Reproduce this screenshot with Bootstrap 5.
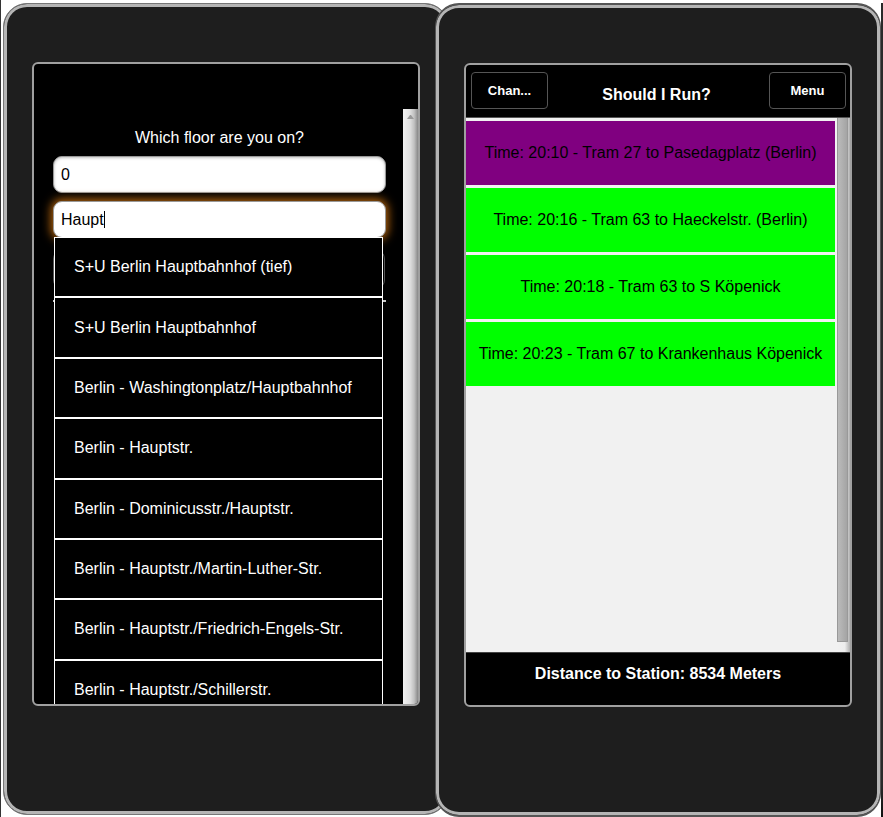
<!DOCTYPE html>
<html lang="en">
<head>
<meta charset="utf-8">
<meta name="viewport" content="width=device-width, initial-scale=1">
<title>Should I Run?</title>
<link href="https://cdn.jsdelivr.net/npm/bootstrap@5.3.0/dist/css/bootstrap.min.css" rel="stylesheet">
<style>
  body { font-family: "Liberation Sans", Arial, sans-serif; font-size: 16px; line-height: 20px; background: #fff; }
  .stage { padding: 3px 2px 0 2px; border-left: 1px solid #333; }
  .edge-strip { width: 2px; background: linear-gradient(#2a2a2a 96%, #111); top: 3px; }
  .phone { flex: 1 1 0; min-width: 0; padding: 58px 28px 108px; background: #1e1e1e; border: 1px solid #777; border-radius: 24px; box-shadow: inset 0 0 0 3px #b5b5b5; }
  .phone-front { margin-left: -14px; border-color: #555; border-width: 2px 1px; }
  .phone-back { margin-bottom: 2px; }
  .screen { border: 2px solid #a0a0a0; border-radius: 6px; background: #000; }
  .top-space { height: 45px; }
  .form-area { padding: 19px 17px 0 19px; min-width: 0; }
  .field { height: 37px; padding: 0 7px; border: 1px solid #999; border-radius: 9px; color: #000; background: #fff; font-size: 16px; box-shadow: inset 0 1px 3px rgba(0,0,0,.25); }
  .field.active-field, .field.active-field:focus { border-color: #999; box-shadow: 0 0 10px 2px #b8660c; outline: 0; }
  .caret { left: 51px; top: 10px; width: 1px; height: 17px; background: #000; }
  .menu-list { left: 1px; right: 3px; top: 36px; height: 484px; z-index: 2; border: 1px solid #fff; border-top: 0; background: #000; }
  .menu-list a { display: flex; align-items: center; padding-left: 19px; border-top: 1px solid #fff; border-bottom: 1px solid #fff; color: #fff; text-decoration: none; white-space: nowrap; }
  .under-panel { height: 39px; margin-top: 12px; border: solid #555; border-width: 0 1px; border-radius: 9px; margin-right: 1px; }
  .under-rule { height: 2px; margin-top: 11px; background: #ccc; }
  .bar-left { width: 15px; padding-top: 6px; background: linear-gradient(90deg, #f2f2f2 0, #e2e2e2 45%, #c0c0c0 75%, #888 100%); }
  .bar-left svg { width: 7px; height: 4px; margin-left: 4px; }
  .app-header { padding: 7px 4px 8px 5px; border-bottom: 1px solid #555; color: #fff; }
  .tool-btn { width: 77px; height: 37px; padding: 0; border: 1px solid #555; border-radius: 4px; background: #000; color: #fff; font-size: 13px; font-weight: 700; }
  .app-title { font-size: 16px; line-height: 20px; font-weight: 700; padding: 8px 4px 0 0; }
  .results { background: #f1f1f1; }
  .trips { padding: 3px 2px 0 0; min-width: 0; }
  .trip { height: 64px; margin-bottom: 3px; background: #0f0; color: #000; white-space: nowrap; }
  .trip-late { background: #800080; }
  .bar-right { width: 13px; background: linear-gradient(90deg, #f1f1f1, #eee 60%, #b0b0b0); padding: 0 2px 10px 0; }
  .thumb { border: 1px solid #999; border-top: 0; background: linear-gradient(90deg, #bbb, #a4a4a4); }
  .app-footer { height: 53px; padding-top: 11px; border-top: 1px solid #444; color: #fff; font-weight: 700; }
</style>
</head>
<body>
<div class="stage d-flex min-vh-100 position-relative">
  <section class="phone phone-back d-flex flex-column" aria-label="Station search">
    <div class="screen d-flex flex-column flex-fill overflow-hidden">
      <div class="top-space"></div>
      <div class="d-flex flex-fill">
        <form class="form-area flex-fill">
          <label for="floor" class="d-block text-center text-white mb-2">Which floor are you on?</label>
          <input id="floor" class="field d-block w-100 mb-2" type="text" value="0">
          <div class="position-relative">
            <input id="station" class="field active-field d-block w-100" type="text" value="Haupt" aria-label="Station">
            <span class="caret position-absolute"></span>
            <nav class="menu-list position-absolute d-flex flex-column" aria-label="Stations">
              <a class="flex-fill" href="#">S+U Berlin Hauptbahnhof (tief)</a>
              <a class="flex-fill" href="#">S+U Berlin Hauptbahnhof</a>
              <a class="flex-fill" href="#">Berlin - Washingtonplatz/Hauptbahnhof</a>
              <a class="flex-fill" href="#">Berlin - Hauptstr.</a>
              <a class="flex-fill" href="#">Berlin - Dominicusstr./Hauptstr.</a>
              <a class="flex-fill" href="#">Berlin - Hauptstr./Martin-Luther-Str.</a>
              <a class="flex-fill" href="#">Berlin - Hauptstr./Friedrich-Engels-Str.</a>
              <a class="flex-fill" href="#">Berlin - Hauptstr./Schillerstr.</a>
            </nav>
          </div>
          <div class="under-panel"></div>
          <div class="under-rule"></div>
        </form>
        <div class="bar-left flex-shrink-0"><svg class="d-block" viewBox="0 0 7 4" aria-hidden="true"><path d="M0 4L3 0H4L7 4Z" fill="#999"/></svg></div>
      </div>
    </div>
  </section>

  <section class="phone phone-front d-flex flex-column position-relative" aria-label="Departures">
    <div class="screen d-flex flex-column flex-fill overflow-hidden">
      <header class="app-header d-flex justify-content-between align-items-center">
        <button class="tool-btn" type="button">Chan...</button>
        <h1 class="app-title m-0">Should I Run?</h1>
        <button class="tool-btn" type="button">Menu</button>
      </header>
      <main class="results d-flex flex-fill">
        <ul class="trips list-unstyled flex-fill m-0">
          <li class="trip trip-late d-flex align-items-center justify-content-center">Time: 20:10 - Tram 27 to Pasedagplatz (Berlin)</li>
          <li class="trip d-flex align-items-center justify-content-center">Time: 20:16 - Tram 63 to Haeckelstr. (Berlin)</li>
          <li class="trip d-flex align-items-center justify-content-center">Time: 20:18 - Tram 63 to S Köpenick</li>
          <li class="trip d-flex align-items-center justify-content-center">Time: 20:23 - Tram 67 to Krankenhaus Köpenick</li>
        </ul>
        <div class="bar-right d-flex flex-column flex-shrink-0"><div class="thumb flex-fill"></div></div>
      </main>
      <footer class="app-footer text-center">Distance to Station: 8534 Meters</footer>
    </div>
  </section>
  <div class="edge-strip position-absolute end-0 bottom-0"></div>
</div>
<script src="https://cdn.jsdelivr.net/npm/bootstrap@5.3.0/dist/js/bootstrap.bundle.min.js"></script>
</body>
</html>
